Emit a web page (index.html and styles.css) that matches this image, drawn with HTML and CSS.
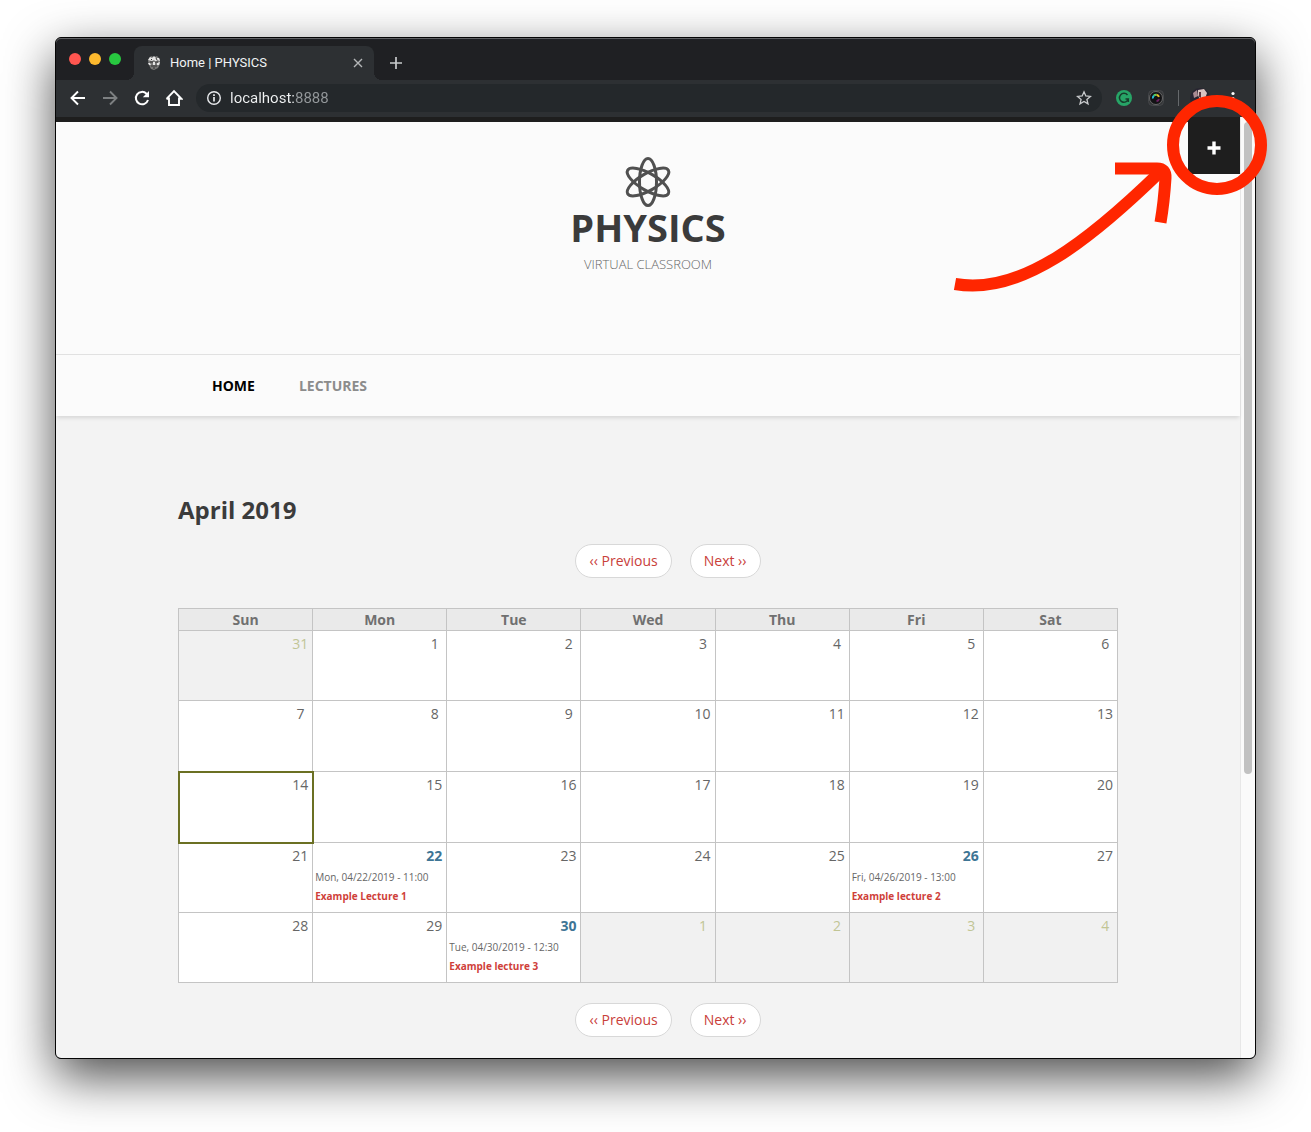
FILE: index.html
```html
<!DOCTYPE html>
<html lang="en">
<head>
<meta charset="utf-8">
<title>Home | PHYSICS</title>
<link rel="stylesheet" href="styles.css">
</head>
<body>
<div class="window">
  <div class="tabstrip">
    <div class="lights"><span class="light red"></span><span class="light yellow"></span><span class="light green"></span></div>
    <div class="tab">
      <svg class="favicon" width="14" height="16" viewBox="0 0 14 16"><path d="M2 3 4 1l3 1 3-1 3 3v5l-2 4-4 2-3-1-2-4-1-4z" fill="#777"/><path d="M1 5 3 2l2 1 2-2 2 2 3 0 1 3-3-1-1 2-2-2-2 1zM1 8l2 0 1 2-2 0zM10 8l3-1-1 3-2 0zM6 7h2l0 3-2 0z" fill="#e4e4e4"/><path d="M3 7h3M8 7h3M4 11l6 0M6 13l2 0M4 4l1 1M9 3l1 2" stroke="#333" stroke-width="1"/></svg>
      <span class="tab-title">Home | PHYSICS</span>
      <button class="icon-btn tab-close" aria-label="Close tab"><svg width="10" height="10" viewBox="0 0 10 10"><path d="M1 1l8 8M9 1l-8 8" stroke="#b4b6b8" stroke-width="1.4"/></svg></button>
    </div>
    <button class="icon-btn new-tab" aria-label="New tab"><svg width="12" height="12" viewBox="0 0 12 12"><path d="M6 0v12M0 6h12" stroke="#c8cacc" stroke-width="1.7"/></svg></button>
  </div>
  <div class="toolbar">
    <button class="icon-btn nav-btn" aria-label="Back"><svg width="16" height="16" viewBox="0 0 16 16"><path d="M15 8H2M8 1.5 1.5 8 8 14.5" fill="none" stroke="#fff" stroke-width="1.9"/></svg></button>
    <button class="icon-btn nav-btn" aria-label="Forward"><svg width="16" height="16" viewBox="0 0 16 16"><path d="M1 8h13M8 1.5 14.5 8 8 14.5" fill="none" stroke="#7d8082" stroke-width="1.9"/></svg></button>
    <button class="icon-btn nav-btn" aria-label="Reload"><svg width="16" height="16" viewBox="0 0 16 16"><path d="M14 10a6.2 6.2 0 1 1-1.5-6.300L14 5" fill="none" stroke="#fff" stroke-width="2"/><path d="M15 1v6.200H8.800z" fill="#fff"/></svg></button>
    <button class="icon-btn nav-btn" aria-label="Home"><svg width="18" height="18" viewBox="0 0 18 18"><path d="M4 8.500V16h10V8.500M1.500 9.800 9 2l7.500 7.800H14M4 9.800H1.500" fill="none" stroke="#fff" stroke-width="1.9"/></svg></button>
    <div class="omnibox">
      <svg width="16" height="16" viewBox="0 0 16 16"><circle cx="8" cy="8" r="6.300" fill="none" stroke="#e8eaed" stroke-width="1.4"/><path d="M8 7v4.500M8 4.300v1.700" stroke="#e8eaed" stroke-width="1.7"/></svg>
      <input class="url" type="text" aria-label="Address" value="localhost:8888">
      <button class="icon-btn" aria-label="Bookmark"><svg width="16" height="16" viewBox="0 0 16 16"><path d="M8 1.800 9.800 6l4.600.4-3.500 3 1.100 4.500L8 11.500l-4 2.400 1.100-4.500-3.500-3L6.200 6z" fill="none" stroke="#c9cbcd" stroke-width="1.3"/></svg></button>
    </div>
    <div class="extensions">
      <svg width="16" height="16" viewBox="0 0 16 16"><circle cx="8" cy="8" r="8" fill="#27a567"/><path d="M11.500 5A4.500 4.500 0 1 0 12.300 9H9.500M12.300 8.500V12" fill="none" stroke="#183d2c" stroke-width="1.5"/></svg>
      <svg width="16" height="16" viewBox="0 0 16 16"><rect x=".5" y=".5" width="15" height="15" rx="4" fill="#343638" stroke="#45474a"/><circle cx="8" cy="8" r="6.500" fill="#121214" stroke="#777" stroke-width=".8"/><g fill="none" stroke-width="2"><path d="M4.900 8.500A3.300 3.300 0 0 1 6 5.400" stroke="#25b9d0"/><path d="M6 5.400A3.300 3.300 0 0 1 8.500 4.700" stroke="#5bd25e"/><path d="M8.500 4.700A3.300 3.300 0 0 1 11 6.800" stroke="#e5c02b"/><path d="M11 9A3.300 3.300 0 0 1 8.500 11.200" stroke="#6b2060"/></g></svg>
      <span class="divider"></span>
      <svg class="avatar" width="20" height="20" viewBox="0 0 20 20"><circle cx="10" cy="10" r="10" fill="#272431"/><path d="M8 2l6-1 3 4-2 6-5 1-2-5z" fill="#d9c3c0"/><path d="M3 5l4-3 1 6-4 2z" fill="#a98a92"/><path d="M9 4l2 0 0 6-2-1z" fill="#5b3540"/></svg>
      <button class="icon-btn" aria-label="Menu"><svg width="16" height="16" viewBox="0 0 16 16"><g fill="#fff"><circle cx="8" cy="3.500" r="1.600"/><circle cx="8" cy="8.500" r="1.600"/><circle cx="8" cy="13.500" r="1.600"/></g></svg></button>
    </div>
  </div>
  <div class="viewport">
    <div class="page">
      <header class="site-header">
        <svg class="atom" width="48" height="52" viewBox="0 0 48 52"><g fill="none" stroke="#505050" stroke-width="3"><ellipse cx="24" cy="26" rx="8.500" ry="23.500"/><ellipse cx="24" cy="26" rx="8.500" ry="23.500" transform="rotate(60 24 26)"/><ellipse cx="24" cy="26" rx="8.500" ry="23.500" transform="rotate(-60 24 26)"/></g></svg>
        <h1 class="site-name">PHYSICS</h1>
        <p class="slogan">VIRTUAL CLASSROOM</p>
      </header>
      <nav class="main-nav">
        <div class="nav-inner"><a class="nav-link active" href="#home">HOME</a><a class="nav-link" href="#lectures">LECTURES</a></div>
      </nav>
      <main class="content">
        <h2 class="month">April 2019</h2>
        <div class="pager"><a href="#prev">‹‹ Previous</a><a href="#next">Next ››</a></div>
        <table class="calendar">
          <thead><tr><th>Sun</th><th>Mon</th><th>Tue</th><th>Wed</th><th>Thu</th><th>Fri</th><th>Sat</th></tr></thead>
          <tbody>
            <tr><td class="other">31</td><td>1&nbsp;</td><td>2&nbsp;</td><td>3&nbsp;</td><td>4&nbsp;</td><td>5&nbsp;</td><td>6&nbsp;</td></tr>
            <tr class="near-today"><td>7&nbsp;</td><td>8&nbsp;</td><td>9&nbsp;</td><td>10</td><td>11</td><td>12</td><td>13</td></tr>
            <tr class="near-today"><td class="today">14</td><td>15</td><td>16</td><td>17</td><td>18</td><td>19</td><td>20</td></tr>
            <tr><td>21</td><td><a class="day" href="#d22">22</a><div class="event"><span>Mon, 04/22/2019 - 11:00</span><a href="#l1">Example Lecture 1</a></div></td><td>23</td><td>24</td><td>25</td><td><a class="day" href="#d26">26</a><div class="event"><span>Fri, 04/26/2019 - 13:00</span><a href="#l2">Example lecture 2</a></div></td><td>27</td></tr>
            <tr><td>28</td><td>29</td><td><a class="day" href="#d30">30</a><div class="event"><span>Tue, 04/30/2019 - 12:30</span><a href="#l3">Example lecture 3</a></div></td><td class="other">1&nbsp;</td><td class="other">2&nbsp;</td><td class="other">3&nbsp;</td><td class="other">4&nbsp;</td></tr>
          </tbody>
        </table>
        <div class="pager"><a href="#prev">‹‹ Previous</a><a href="#next">Next ››</a></div>
      </main>
      <button class="panel-toggle" aria-label="Open panel"><svg width="14" height="14" viewBox="0 0 14 14"><path d="M7 .5v13M.5 7h13" stroke="#fff" stroke-width="3.4"/></svg></button>
    </div>
    <div class="scrollbar"><div class="thumb"></div></div>
  </div>
  <svg class="annotation" width="320" height="220" viewBox="0 0 320 220" fill="none" stroke="#ff2600" stroke-width="12"><circle cx="267" cy="65" r="44"/><path d="M5 204C70 216 140 160 210 92"/><path d="M165 88.500H207Q216 88.500 215.500 98 214 122 210.500 142.500"/></svg>
</div>
</body>
</html>
```
FILE: styles.css
```css
* { box-sizing: border-box; }
body {
  margin: 0;
  padding: 37px 55px 73px;
  background: #fff;
  color: #666;
  font-family: "Open Sans", "Noto Sans", sans-serif;
  font-size: 14px;
  line-height: 20px;
}
a { text-decoration: none; }
svg { display: block; flex: none; }

.window {
  position: relative;
  border: 1px solid #050505;
  border-radius: 6px;
  background: #1f2023;
  box-shadow: 0 18px 50px rgba(0, 0, 0, .7);
}
.icon-btn {
  display: flex;
  align-items: center;
  justify-content: center;
  padding: 0;
  border: 0;
  background: none;
}

/* Browser tabs */
.tabstrip {
  display: flex;
  align-items: flex-end;
  height: 42px;
  padding-left: 13px;
  border-radius: 5px 5px 0 0;
  background: #1f2023;
  box-shadow: inset 0 1px 0 #606164;
}
.lights { display: flex; gap: 8px; align-self: center; width: 65px; }
.light { width: 12px; height: 12px; border-radius: 50%; }
.red { background: #ff5650; }
.yellow { background: #fdb92e; }
.green { background: #28c840; }
.tab {
  position: relative;
  display: flex;
  align-items: center;
  width: 240px;
  height: 34px;
  padding: 0 11px 0 13px;
  border-radius: 8px 8px 0 0;
  background: #2d3033;
  color: #f1f3f4;
  font-family: Roboto, sans-serif;
  font-size: 13px;
}
.tab::before, .tab::after {
  content: "";
  position: absolute;
  bottom: 0;
  width: 8px;
  height: 8px;
}
.tab::before { right: 100%; background: radial-gradient(circle at 0 0, transparent 8px, #2d3033 8px); }
.tab::after { left: 100%; background: radial-gradient(circle at 100% 0, transparent 8px, #2d3033 8px); }
.tab-title { flex: 1; margin-left: 9px; }
.new-tab { width: 44px; height: 34px; }

/* Address row */
.toolbar {
  display: flex;
  align-items: center;
  height: 37px;
  padding: 0 14px 1px 6px;
  background: #2d3033;
}
.nav-btn { width: 32px; height: 32px; }
.omnibox {
  display: flex;
  flex: 1;
  align-items: center;
  height: 28px;
  margin-left: 6px;
  padding: 0 10px;
  border-radius: 14px;
  background: #24282b;
}
.url {
  flex: 1;
  margin: 0 0 0 8px;
  padding: 0;
  border: 0;
  background: linear-gradient(to right, #f1f3f4 64px, #94989b 64px);
  background-clip: text;
  -webkit-text-fill-color: transparent;
  font: 15px/20px Roboto, sans-serif;
}
.extensions { display: flex; align-items: center; gap: 16px; padding-left: 14px; }
.divider { width: 1px; height: 16px; margin: 0 -2px; background: #66696c; }
.avatar { margin: 0 -1px 0 -3px; }

/* Page */
.viewport { display: flex; border-radius: 0 0 5px 5px; overflow: hidden; }
.page {
  position: relative;
  flex: 1;
  border-top: 5px solid #1e1e1e;
  background: #f3f3f3;
}
.site-header {
  display: flex;
  flex-direction: column;
  align-items: center;
  padding: 34px 0 80px;
  background: #fbfbfb;
  text-align: center;
}
.site-name {
  margin: 0;
  color: #3b3b3b;
  font-size: 38px;
  line-height: 38px;
}
.slogan { margin: 8px 0 0; color: #666; font-size: 13px; font-weight: 300; }
.main-nav {
  border-top: 1px solid #e1e1e1;
  background: #fbfbfb;
  box-shadow: 0 3px 4px -1px rgba(0, 0, 0, .12);
}
.nav-inner {
  display: flex;
  gap: 44px;
  max-width: 940px;
  margin: 0 auto;
  padding: 21px 34px 20px;
}
.nav-link { color: #8c8c8c; font-weight: 700; }
.nav-link.active { color: #000; }
.content { max-width: 940px; margin: 0 auto; padding: 78px 0 21px; }
.month { margin: 0 0 18px; color: #3b3b3b; font-size: 24px; line-height: 32px; }
.pager {
  display: flex;
  justify-content: center;
  gap: 18px;
  padding-left: 40px;
}
.pager a {
  padding: 6px 13px;
  border: 1px solid #d8d8d8;
  border-radius: 17px;
  background: #fff;
  color: #c9403a;
}

.calendar {
  width: 100%;
  margin: 30px 0 20px;
  border-collapse: collapse;
  table-layout: fixed;
}
.calendar th {
  height: 22px;
  padding: 0;
  border: 1px solid #c4c4c4;
  background: #eaeaea;
  color: #707070;
}
.calendar td {
  height: 70px;
  padding: 3px 4px 0 2px;
  border: 1px solid #c4c4c4;
  background: #fff;
  text-align: right;
  vertical-align: top;
}
.calendar .near-today td { height: 71px; }
.calendar .other { background: #f1f1f1; color: #c1c595; }
.calendar .today { outline: 2px solid #6b7023; outline-offset: -1px; }
.day { color: #3e7595; font-weight: 700; }
.event {
  display: flex;
  flex-direction: column;
  margin-top: 2px;
  font-size: 10px;
  line-height: 19px;
  text-align: left;
}
.event a { color: #cf3f3a; font-weight: 700; }

.panel-toggle {
  position: absolute;
  top: -5px;
  right: 0;
  display: flex;
  align-items: center;
  justify-content: center;
  width: 52px;
  height: 57px;
  padding: 5px 0 0;
  border: 0;
  background: #1e1e1e;
}
.scrollbar {
  width: 15px;
  padding: 5px 3px;
  border-left: 1px solid #e7e7e7;
  background: #fafafa;
}
.thumb { height: 70%; border-radius: 4px; background: #c1c1c1; }

/* Hand-drawn highlight around the panel toggle */
.annotation { position: absolute; top: 42px; right: -15px; pointer-events: none; }
```
